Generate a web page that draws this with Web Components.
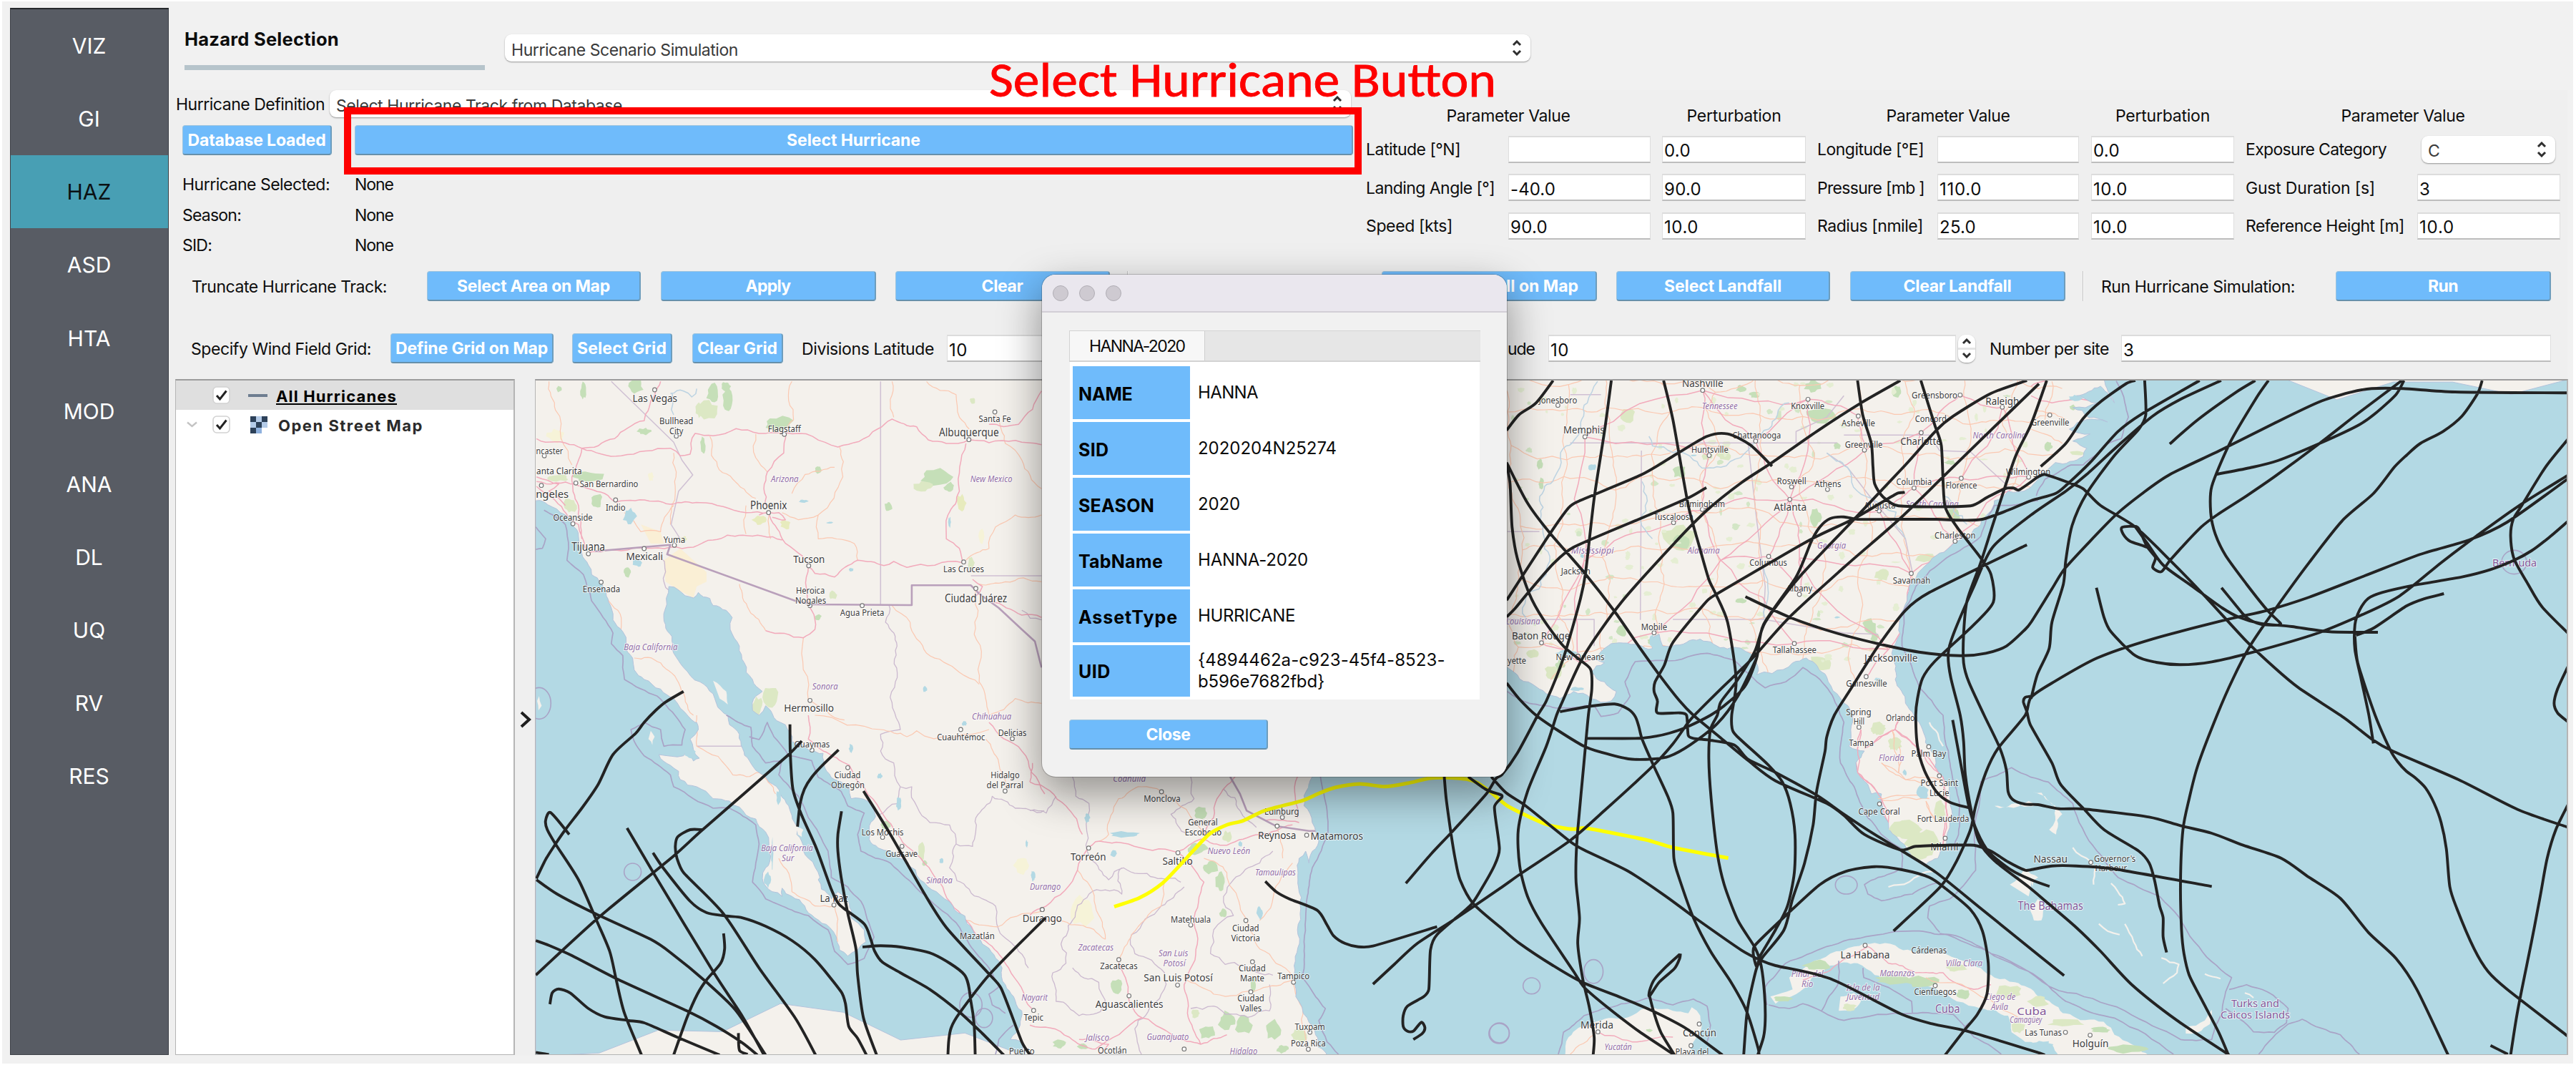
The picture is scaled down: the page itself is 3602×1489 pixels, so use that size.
<!DOCTYPE html>
<html lang="en">
<head>
<meta charset="utf-8">
<title>Hazard Selection</title>
<style>
  body { margin: 0; background: #fff; font-family: Inter, "Liberation Sans", sans-serif; color: #0d0d0d; }
</style>
</head>
<body>
<haz-app></haz-app>
<script>
const ctx = document.createElement('canvas').getContext('2d');
// letter spacing that makes a text take up the wanted width
const spacing = (text, width, font) => {
  ctx.font = font;
  return ((width - ctx.measureText(text).width) / text.length).toFixed(3) + 'px';
};
class Base extends HTMLElement {
  connectedCallback() {
    if (this.shadowRoot) return;
    this.attachShadow({ mode: 'open' }).innerHTML = this.render();
    this.ready && this.ready();
  }
  a(name, fallback = '') { return this.hasAttribute(name) ? this.getAttribute(name) : fallback; }
}
const def = (name, cls) => customElements.define(name, cls);

def('ui-label', class extends Base {
  render() {
    const size = this.a('size', 23), weight = this.a('weight', 400), w = +this.a('w');
    const ls = w ? spacing(this.textContent.trim(), w, `${weight} ${size}px Inter`) : '0';
    return `<style>:host{display:inline-block;flex:none;white-space:pre;line-height:1.2;padding-top:3px;font-size:${size}px;font-weight:${weight};letter-spacing:${ls};${w ? `width:${w}px` : ''}}</style><slot></slot>`;
  }
});
def('ui-button', class extends Base {
  render() {
    const t = this.a('text');
    return `<style>:host{display:flex;flex:none;box-sizing:border-box;height:42px;align-items:center;justify-content:${this.a('align', 'center')};background:#6fbbfb;border:1px solid #9cc4df;border-right:2px solid #6d9dbd;border-bottom:2.5px solid #6690ab;border-radius:4px;color:#fff}</style>
    <ui-label size="23" weight="700" w="${this.a('tw')}">${t}</ui-label>`;
  }
});
def('ui-field', class extends Base {
  render() {
    return `<style>:host{display:flex;flex:none;box-sizing:border-box;height:38px;align-items:center;background:#fff;border:1px solid #dedede;border-top:2px solid #dcdcdc;border-bottom:2px solid #bdbdbd;padding:3px 0 0 2px}</style>
    <ui-label size="24" w="${this.a('tw')}">${this.a('value')}</ui-label>`;
  }
});
const chevrons = (h = 22) => `<svg width="14" height="${h}" viewBox="0 0 14 ${h}" fill="none" stroke="#2f2f2f" stroke-width="3"><path d="M2 7L7 2L12 7M2 ${h - 7}L7 ${h - 2}L12 ${h - 7}"/></svg>`;
def('ui-combo', class extends Base {
  render() {
    return `<style>:host{display:flex;flex:none;box-sizing:border-box;height:38px;align-items:center;justify-content:space-between;background:#fff;border-radius:9px;box-shadow:0 1px 2px rgba(0,0,0,.38);padding:0 12px 0 9px;color:#3a3a3a}ui-label{padding-top:7px}</style>
    <ui-label size="23" w="${this.a('tw')}">${this.a('value')}</ui-label>${chevrons()}`;
  }
});
def('ui-stepper', class extends Base {
  render() {
    return `<style>:host{display:flex;flex:none;width:24px;height:39px;align-items:center;justify-content:center;border-radius:10px;background:linear-gradient(#fff 46%,#e4e4e4 46%,#e4e4e4 54%,#fff 54%);box-shadow:0 1px 2px rgba(0,0,0,.38)}</style>${chevrons(28)}`;
  }
});
def('nav-item', class extends Base {
  render() {
    return `<style>:host{display:flex;height:102.15px;align-items:center;justify-content:center;font-size:30px;color:#fff;padding-right:1px}
    :host([active]){background:#489fb4;color:#0b1114}</style><slot></slot>`;
  }
});
def('nav-rail', class extends Base {
  render() {
    return `<style>:host{display:block;flex:none;box-sizing:border-box;width:222px;height:1464px;background:#585c64;border:1px solid #3d4147;border-top:2px solid #26292c}</style><slot></slot>`;
  }
});
def('param-grid', class extends Base {
  render() {
    const rows = [
      ['Latitude [°N]', 132, '', 0, '0.0', 37, 'Longitude [°E]', 149, '', 0, '0.0', 37, 'Exposure Category', 197],
      ['Landing Angle [°]', 180, '-40.0', 63, '90.0', 52, 'Pressure [mb ]', 150, '110.0', 59, '10.0', 48, 'Gust Duration [s]', 181, '3', 14],
      ['Speed [kts]', 121, '90.0', 52, '10.0', 48, 'Radius [nmile]', 148, '25.0', 51, '10.0', 48, 'Reference Height [m]', 222, '10.0', 49]];
    const L = (c, t, w) => `<ui-label style="grid-column:${c}" w="${w}">${t}</ui-label>`;
    const F = (c, t, w) => `<ui-field style="grid-column:${c}" value="${t}" tw="${w || ''}"></ui-field>`;
    return `<style>:host{display:grid;grid-template-columns:199px 199px 16px 201px 16px 168px 198px 17px 200px 16px 240px 200px;grid-template-rows:26px 38px 38px 38px;row-gap:15.5px;align-items:center;align-content:start;margin-top:22px;margin-left:-1px;flex:none}
    .h{justify-self:center}ui-combo{width:187px;margin-left:6px}</style>
    <ui-label class="h" style="grid-column:1/3" w="173">Parameter Value</ui-label><ui-label class="h" style="grid-column:4" w="132">Perturbation</ui-label>
    <ui-label class="h" style="grid-column:6/8" w="173">Parameter Value</ui-label><ui-label class="h" style="grid-column:9" w="132">Perturbation</ui-label>
    <ui-label class="h" style="grid-column:11/13" w="173">Parameter Value</ui-label>` +
      rows.map(r => L(1, r[0], r[1]) + F(2, r[2], r[3]) + F(4, r[4], r[5]) + L(6, r[6], r[7]) + F(7, r[8], r[9]) + F(9, r[10], r[11]) + L(11, r[12], r[13]) +
        (r.length > 14 ? F(12, r[14], r[15]) : '<ui-combo style="grid-column:12" value="C" tw="16"></ui-combo>')).join('');
  }
});
const check = `<svg width="25" height="25" viewBox="0 0 25 25"><rect x="1" y="1" width="23" height="23" rx="5" fill="#fff" stroke="#d2d2d2" stroke-width="1.6"/><path d="M6 13L10.5 18L19.5 6.5" fill="none" stroke="#222" stroke-width="3"/></svg>`;
def('layer-tree', class extends Base {
  render() {
    return `<style>:host{display:block;flex:none;box-sizing:border-box;width:475px;height:945px;background:#fff;border:1px solid #b5b5b5;border-top:2px solid #9c9c9c;border-right-width:2px}
    .r{display:flex;height:41px;align-items:center}.s{background:#dfdfdf}svg{flex:none}
    .s ui-label{text-decoration:underline;text-decoration-thickness:2px;text-underline-offset:2px;color:#000}.r+.r ui-label{color:#2b2b2b}</style>
    <div class="r s"><span style="width:51px"></span>${check}<svg style="margin:0 12px 0 25px" width="27" height="4"><rect width="27" height="4" fill="#6e7d90"/></svg><ui-label size="22" weight="700" w="169">All Hurricanes</ui-label></div>
    <div class="r"><svg style="margin:0 21px 0 15px" width="15" height="9" viewBox="0 0 15 9"><path d="M1 1.5L7.5 7L14 1.5" fill="none" stroke="#c4c4c4" stroke-width="2.4"/></svg>${check}
    <svg style="margin:0 15px 0 28px" width="24" height="24" viewBox="0 0 3 3"><rect width="3" height="3" fill="#b4cbe8"/><path d="M0 0h1v1H0zM2 0h1v1H2zM1 1h1v1H1zM0 2h1v1H0z" fill="#2d4159"/><path d="M2 2h1v1H2z" fill="#fff"/><path d="M1 2h1v1H1z" fill="#8fb1de"/></svg><ui-label size="22" weight="700" w="203">Open Street Map</ui-label></div>`;
  }
});

/* ---------- map data: every list is written in the grid of one sheet (letter prefix) ---------- */
const SHEET = { A: [740, 520, 720 / 1568, 1 / 3], B: [740, 1000, 720 / 1568, 1 / 3], C: [1440, 1000, 720 / 1568, 1 / 3],
  D: [2100, 520, 750 / 1568, 1 / 3], E: [2100, 1000, 750 / 1568, 1 / 3], F: [2840, 520, 762 / 1568, 1 / 3], G: [2840, 1000, 762 / 1568, 1 / 3] };
const at = (s, x, y) => [SHEET[s][0] + x * SHEET[s][2], SHEET[s][1] + y * SHEET[s][3]];
const pts = str => {
  let s = 'A'; const out = [];
  for (const tok of str.trim().split(/\s+/)) {
    const m = tok.match(/^([A-G]?)(-?[\d.]+),(-?[\d.]+)$/);
    if (m[1]) s = m[1];
    out.push(at(s, +m[2], +m[3]));
  }
  return out;
};
let seed = 7;
const rnd = () => (seed = (seed * 16807) % 2147483647) / 2147483647;
const P = p => p.map(q => q[0].toFixed(1) + ',' + q[1].toFixed(1)).join(' ');
const line = p => 'M' + P(p);
const wobble = (p, amt = .09) => {
  for (let k = 0; k < 3; k++) {
    const o = [p[0]];
    for (let i = 1; i < p.length; i++) {
      const [a, b] = [p[i - 1], p[i]], dx = b[0] - a[0], dy = b[1] - a[1];
      if (Math.hypot(dx, dy) > 9) { const r = (rnd() - .5) * 2 * amt; o.push([(a[0] + b[0]) / 2 - dy * r, (a[1] + b[1]) / 2 + dx * r]); }
      o.push(b);
    }
    p = o;
  }
  return p;
};
const smooth = p => {
  let d = 'M' + p[0].map(v => v.toFixed(1));
  for (let i = 0; i < p.length - 1; i++) {
    const a = p[i - 1] || p[i], b = p[i], c = p[i + 1], e = p[i + 2] || c, k = 7.5;
    const L = Math.hypot(c[0] - b[0], c[1] - b[1]), f = (u, v) => { const m = Math.hypot(v[0] - u[0], v[1] - u[1]) / k; return m > L / 3 ? L / 3 / m / k : 1 / k; };
    const f1 = f(a, c), f2 = f(b, e);
    d += `C${(b[0] + (c[0] - a[0]) * f1).toFixed(1)} ${(b[1] + (c[1] - a[1]) * f1).toFixed(1)} ${(c[0] - (e[0] - b[0]) * f2).toFixed(1)} ${(c[1] - (e[1] - b[1]) * f2).toFixed(1)} ${c[0].toFixed(1)} ${c[1].toFixed(1)}`;
  }
  return d;
};
const WATER = [
 'A20,540 45,545 95,590 130,635 150,690 160,760 180,810 190,850 220,885 235,940 250,990 255,1040 285,1090 295,1140 315,1200 320,1250 350,1290 400,1330 440,1370 460,1410 485,1445 505,1470 B510,30 515,60 490,100 518,180 500,192 480,150 470,170 395,165 430,210 455,235 460,270 510,300 560,350 610,360 640,385 690,435 720,490 730,540 735,590 720,640 710,685 740,740 770,760 770,725 800,760 870,850 915,890 935,930 945,985 970,1010 1000,985 1025,950 1020,900 980,850 975,790 940,740 920,770 890,730 880,690 885,680 850,600 830,530 815,500 820,470 800,420 790,380 765,330 730,280 700,240 670,190 650,140 640,80 610,40 605,0 A570,1390 560,1350 520,1300 470,1240 440,1180 435,1110 415,1060 413,1000 425,900 455,915 500,948 515,925 550,950 560,980 600,1000 618,1030 612,1080 640,1150 655,1220 680,1290 710,1340 690,1360 680,1420 700,1440 720,1400 745,1450 765,1470 B780,40 800,110 850,145 895,160 900,220 930,270 975,300 980,350 1030,360 1050,400 1055,425 1035,480 1035,520 1100,570 1150,620 1190,690 1240,740 1290,800 1350,900 1380,960 1440,1060 1450,1130 1475,1180 1500,1240 1495,1300 1465,1360 1500,1370 1510,1430 20,1430',
 'C905,1430 870,1340 845,1270 810,1180 800,1120 805,1050 815,900 818,720 820,600 840,570 850,620 870,560 880,530 860,450 835,380 850,300 860,258 D16,1240 45,1270 90,1310 130,1350 170,1370 210,1340 260,1370 320,1380 335,1340 300,1300 260,1260 300,1220 270,1200 310,1150 400,1145 440,1160 445,1110 460,1100 470,1150 520,1145 600,1130 680,1155 740,1200 745,1270 790,1265 850,1220 890,1200 950,1280 980,1350 1020,1420 1025,1470 E1020,60 1015,130 1060,150 1035,200 1050,260 1080,330 1110,330 1110,370 1130,450 1165,530 1200,600 1240,625 1275,600 1300,540 1310,450 1310,350 1290,260 1260,160 1230,60 1205,0 D1180,1390 1150,1290 1140,1180 1165,1100 1165,1030 1185,960 1200,880 1240,810 1280,760 1320,720 1370,690 1400,640 1440,540 1480,500 1540,490 1568,450 F30,425 70,380 150,355 160,320 120,290 170,260 110,240 160,200 220,210 120,150 190,130 130,100 200,60 225,100 240,130 210,30 1550,30 G1550,1430'];
const LAND = [
 'E185,1430 195,1350 225,1310 290,1280 380,1260 440,1225 500,1240 545,1250 555,1225 580,1260 585,1300 560,1370 555,1430',
 'E785,1180 850,1150 840,1100 900,1040 960,1000 1030,970 1090,955 1150,965 1200,990 1270,990 1330,1020 1400,1060 1440,1100 1500,1120 1568,1180 G60,1210 130,1270 230,1310 240,1340 290,1380 355,1430 80,1430 60,1380 0,1370 E1530,1370 1490,1330 1480,1260 1400,1230 1330,1200 1280,1160 1220,1120 1130,1110 1090,1090 1040,1040 960,1050 930,1080 900,1120 860,1170 800,1210',
 'E990,1180 1030,1165 1050,1200 1020,1240 985,1240', 'E1485,710 1530,640 1568,680 G10,690 5,720 0,700 E1540,760',
 'G0,800 20,770 38,800 30,860 8,860 E1545,820','E1440,380 1480,385 1540,360 1568,370 1490,372 1455,390','G5,320 30,325 60,370 90,415 75,440 72,500 52,480 70,440 70,380 40,340','G445,1310 500,1280 520,1235 515,1295 480,1330 445,1335','B370,65 382,90 375,125 363,100','A560,1295 600,1340 605,1395 580,1370','A30,1360 38,1400 28,1420 24,1380','B815,470 835,480 830,510 818,500'];
const ISLETS = ['G120,555 130,575 160,600 185,640 180,710','G230,705 250,740 270,790 250,795','G270,875 295,950 320,1010','G195,875 220,905 255,920','G375,1018 425,1045 420,1080 380,1125','G500,1085 545,1105','G615,1165 640,1185','E1130,720 1190,700 1260,655','D1250,1470 E1290,130'];
const PINK = ['A22,280 50,295 110,298 160,320 210,310 260,280 300,235 350,205 365,150 400,40','A160,320 280,352 430,320 460,352 490,345 505,258 560,268 630,238 700,258 780,255 940,315 1060,240 1105,198 1180,230 1215,285 1270,300 1340,285 1400,297 1560,305','A780,255 775,340 725,420 720,560','A140,470 230,510 265,545 380,542 430,555 520,548 660,590 730,590 770,700 820,760 850,815 870,845 930,860 1000,790 1080,812 1110,795 1150,820 1320,800 1310,740 1270,700 1275,600 1310,500 1330,300','A180,760 280,750 430,735 500,735 560,705 650,685 770,705','A22,460 140,470','A1560,80 1490,220 1400,220','A850,815 860,1000 870,1080 835,1115 720,1085','A22,480 80,540 150,640 170,740','A22,440 90,470 60,500 110,560','A160,320 130,440 150,560 160,700','A1405,960 1500,1020 1560,1030','A700,600 760,590 780,620 740,610','A1350,870 1380,900 1360,940',
 'B850,0 850,100 895,150 975,210 1070,400 1150,550 1250,700 1330,860 1400,960 1460,1060 1530,1230','B1400,30 1500,150 1530,240 1570,330',
 'C178,555 145,650 50,800 0,840','C178,555 200,530 300,540 450,575 520,520 600,545 700,500 800,460','C450,575 530,700 500,870 510,960 470,1130 480,1250 520,1380','C270,1025 300,1180 330,1260 440,1350 520,1380 600,1340','C0,280 110,380 160,500','C625,258 570,350 530,500','C815,258 815,430','C0,1300 120,1350 200,1400 340,1270','C8,200 0,280','C150,1360 240,1380 210,1422','C720,440 820,450',
 'E1050,60 1040,140 1040,240 1110,350 1130,450','E1150,60 1060,140','E1150,60 1230,160 1290,260 1300,400 1290,540','E1150,60 1170,0','E1070,970 1130,1040 1210,1080 1290,1080 1380,1150 1430,1130','E1070,970 960,1070 880,1110','E275,1330 380,1370 500,1350','F0,100 60,130 220,130','F0,60 40,38'];
const ORANGE = ['A60,40 80,160 130,390','A550,270 555,350 620,450 690,530','A945,315 955,440 880,600 820,620 770,590','A690,260 690,360 725,420','A1105,40 1110,190','A1210,40 1300,95 1310,190 1340,240','A1420,180 1450,300 1500,370 1560,490','A1560,600 1480,600 1420,650 1400,740 1330,790','A1360,900 1355,1100 1370,1300 1400,1440','A835,1115 850,1380','A640,890 670,1000 720,1085','A1105,980 1160,1050 1210,1180 1310,1260 1370,1310','A320,1200 400,1220 460,1320 500,1440','A880,600 880,700 990,720 1000,790','A220,885 270,1000 295,1130','A290,590 340,670 400,670 440,560','A930,400 840,430 800,510','A800,40 805,200 780,255','A1560,880 1450,880 1370,890','A850,1380 960,1460','A1400,1440 1480,1370 1560,1390','A440,340 445,500 430,640','A660,560 660,680','A730,600 735,700',
 'B870,0 1070,60 1150,90 1180,65 1400,60','B510,0 510,130 620,250 700,240 750,330','B760,600 800,740 870,800 930,800 940,950','B1390,100 1430,200 1450,300','B1330,860 1440,880 1568,820',
 'C145,650 200,800 230,940','C410,700 400,800 310,920 270,1025','C340,300 270,350 240,500 200,530','C400,320 340,300','C400,320 530,500','C530,600 600,660 640,800 660,860','C660,860 700,980 800,1100','C50,860 150,880 230,940','C800,620 760,700 700,860','C470,1100 560,1170 700,1150 800,1110','C800,1120 830,1300 850,1400','C750,460 770,600','E1110,200 1180,270 1290,270','E1140,60 1160,240','E1100,350 1250,350','E1240,360 1270,440','E200,1422 275,1330','E1240,1100 1400,1180 1520,1280','F10,160 100,200','F0,240 90,300','F60,40 40,200'];
const CITIES = [[243,272],[587,77],[742,290],[585,578],[842,535],[240,795],[445,1095],[230,1220],[116,1137],[640,790],[780,775],[855,1140],[1130,1165],[1197,845],[1325,710],[1205,487],[1225,255],[1060,330],[1042,185],[895,115],[1463,148],[1340,97],[1103,585],[1343,447],[605,350],[1540,440],[1065,1280],[870,935],[870,780],[500,635]];
const LINKS = '0-1 1-2 2-4 3-4 0-24 24-1 3-24 3-9 9-10 9-6 6-7 7-8 5-7 5-0 5-8 9-4 10-4 4-28 28-13 28-12 13-12 13-14 22-15 22-4 22-13 15-16 15-14 16-17 17-4 16-21 21-20 18-19 19-2 19-1 18-17 15-23 23-25 20-25 20-23 12-11 11-6 12-26 10-27 27-28 3-29 29-5 11-9 14-25 19-4'.split(' ');
for (const l of LINKS) { const [a, b] = l.split('-').map(i => CITIES[i]); PINK.push(`D${a} ${b}`); }
for (let j = 0; j < 9; j++) for (let i = 0; i < 11; i++) {
  const g = (i, j) => { const t = Math.sin(i * 12.9 + j * 78.2) * 43758.5, f = t - Math.floor(t); return `D${(30 + i * 145 + (f - .5) * 70).toFixed(0)},${(50 + j * 140 + (f * 7 % 1 - .5) * 80).toFixed(0)}`; };
  if (i * 145 > 1150 && j > 5) continue;
  ORANGE.push(g(i, j) + ' ' + g(i + 1, j), g(i, j) + ' ' + g(i, j + 1));
}
const BORDER = ['A200,752 430,725 420,765 810,960 860,975 1165,978 1165,895 1345,895 1370,930 1430,990 1500,1080 1540,1130 1560,1240','C610,258 640,330 660,400 750,465 850,485 905,485'];
const ADMIN = ['A1095,975 1085,1050 1120,1150 1115,1300 1125,1470 B1130,60 1070,80 1070,150 1110,200 1130,300 1165,300 1220,450 1280,460 1300,540 1280,640 1340,730 1380,770 1420,800 1430,900 1490,990 1520,1060','A400,770 410,880 430,920','B1130,300 1125,370 1060,420','B1300,540 1350,550 1360,430 1410,340 1480,390 1568,400','C130,258 140,340 180,370 185,600 240,690 285,640 380,680 460,700','C0,400 50,410 80,340','C490,258 500,350 430,415 480,500','C590,310 640,400 690,470','C470,720 400,800 310,920 320,1000 410,1080 400,1170','C180,750 280,750 280,640','C180,750 130,860 95,960 110,1040 70,1080 80,1200 150,1260 230,1220 210,1120 130,1060','C740,570 700,620 620,690 590,760 620,840 560,900 550,1000 650,1050 740,1090','C490,1230 560,1220 640,1260 730,1240 730,1130','C400,1170 330,1280 340,1422','A1560,1040 1500,1000'];
const STATE = ['A250,40 440,295 465,370 498,432 455,500 432,640 460,700','A1070,40 1070,975','A1345,855 1560,855','D200,298 980,298','D408,330 405,1040','D720,300 745,620 770,900 765,1035','D500,1038 765,1038 1000,1095 1100,1100','D950,340 1010,400 1080,530 1180,700 1200,840','D270,1150 270,1038 16,1038','D860,298 860,250 950,190 1000,100','D1000,265 1250,265 1280,330 1370,335 1480,480','D16,670 110,670','D200,95 290,95','B510,130 650,130'];
const RIVER = ['D280,40 250,130 230,240 180,320 170,400 125,480 115,600 125,700 130,850 70,950 70,1030','D430,270 440,310 560,370 640,400 740,290','D950,340 1010,400 1080,530 1180,700','D840,130 780,240 740,290','D765,820 770,1035','D410,460 405,620 440,700','A430,90 470,80 495,105 510,70','A435,90 440,180','D1290,520 1360,640'];
const SEA = ['A45,580 110,640 120,740 115,790 165,850 190,960 225,1030 255,1095 250,1140 285,1190 290,1290 390,1360 460,1470 B475,60 465,125 410,130 400,60 350,30 310,60 320,110 350,170 430,250 440,300 500,350 560,390 610,390 690,460 700,540 690,620 680,700 720,770 770,800 850,840 910,900 930,990 970,1045 1020,1020 1050,930 1010,780 970,720 920,680 910,570 850,430 820,340 760,250 770,190 720,200 680,130 675,50 A600,1440','B670,90 700,102 725,30 745,90 790,170 860,190 880,260 950,320 970,380 1020,410 1000,500 1010,570 1100,620 1190,740 1300,870 1340,960 1400,1060 1430,1140 1400,1170 1410,1215 1450,1250','B1420,1422 1430,1360 1475,1300','A20,650 50,700 40,740 20,745','C885,258 905,400 908,490 860,640 845,760 835,950 830,1100 870,1180 900,1230 880,1280 905,1370 940,1422',
 'D16,1340 80,1390 160,1410 270,1400 290,1445 340,1430 375,1360 360,1300 390,1215 450,1210 600,1180 680,1210 770,1325 830,1300 880,1240 930,1290 980,1400 1000,1470 E990,200 1030,300 1070,430 1110,500 1170,560 1170,640 1100,680 1060,710 1070,750 1110,778 1200,750 1280,700','F15,520 40,450 115,390 150,390 210,310 260,280 280,190 270,130 245,38','D1568,540 1440,560 1400,690 1300,780 1210,900 1175,1000 1170,1150 1220,1320 1290,1440 E1310,200 1335,350 1335,500 1320,560','E770,1140 830,1040 950,970 1080,925 1220,905 1310,920 1430,1000 1568,1100 G100,1200 180,1250 240,1270 410,1422','E1280,915 1440,1010 G80,1155 270,1240 430,1360 520,1360 550,1240 560,1160 577,1100 470,950 370,760 250,680 190,570 120,370 50,280 0,260 E1490,220 1400,280 1385,560 1385,650 1310,770 1250,800 1245,850 1280,910','E780,1215 840,1230 880,1210 940,1245 1000,1280 1200,1250 1320,1255 1380,1350 1460,1422','E770,1140 775,1215','E935,1240 985,1120 985,1030','E1200,1250 1198,1200 1058,1100 1056,1060','G570,1150 620,1130 680,1160 740,1230 735,1290 700,1330 640,1328 560,1230','G655,1422 740,1295 780,1275 890,1340 945,1422','E165,1422 180,1330 240,1260 350,1210 430,1185 500,1215 560,1190 600,1220 610,1300 600,1370','E1350,1310 1365,1290'];
const RINGS = ['B315,657,26,36','C1528,1135,26,34','C1430,1332,30,42','E268,1075,28,50','E1007,712,32,38','F1390,798,36,50','A30,1390,36,66','E-8,1335,30,42','B1345,1215,34,52','B1385,1270,26,40'];
const GREEN = [ 'A325,60,22,30','A165,80,9,35','A90,72,8,12','A560,90,20,40','A605,120,16,50','A540,160,34,38,2','A760,220,44,32','A528,310,8,38','A350,250,20,14','A180,440,46,24','A90,445,30,14,2','A205,540,16,30','A125,560,20,30,2','A1240,440,50,36','A1200,480,28,20,2','A1280,485,16,24','A1315,550,14,34,3','A1095,565,12,22','A300,840,11,20','A735,1365,22,42,2','A695,1400,16,36,2','A880,410,10,16','A700,620,20,20,3','A780,640,16,20,3','A1345,800,10,26,2','A520,160,14,30,2','A470,700,10,10,3','A1350,120,10,12,2','A880,1030,10,12','A925,935,12,20,2','A80,270,26,30,4','A370,440,9,18,4','A1378,690,9,28,4','A600,60,14,20','B1085,460,16,16','B1195,570,10,40,2','B1205,620,8,14','B1500,630,24,40,4','C520,410,20,24','C510,560,30,24','C550,640,22,26','C580,700,14,40','C590,830,12,20','C265,1140,18,30','C540,1330,26,30','C600,1280,26,36','C650,1300,26,40','C740,1320,22,40','C770,1400,18,18','C90,1380,20,18','C160,1390,18,14','C680,1130,8,30','C160,820,34,60,4','C600,510,14,24,2','C820,1340,24,30,2','C505,1250,14,20,2',
 'D935,180,48,32','D520,420,22,24','D520,700,50,60,2','D520,715,28,30','D918,610,16,40','D115,470,8,26','D110,385,10,22','D370,180,22,30,2','D700,70,16,14','D740,95,16,14','D910,60,26,24','D1155,80,14,24','D1075,1070,20,34','D1090,1110,12,22','D350,1090,14,24','D150,1260,24,30,2','D930,1220,40,30,2','D1310,380,16,10','D1320,600,20,26','D170,1230,14,20','D700,960,16,10','D435,1130,10,14','D650,350,20,24,2','D1110,850,20,26,2','D90,1180,20,18,2','D980,310,10,16','D600,355,16,16,2','D1240,780,30,20,2','D1200,930,10,50,2','E1180,480,44,36,2','E1230,540,46,60,2','E1280,400,16,40,2','E1100,55,20,26,2','E1150,120,20,26,2','E920,1050,40,22','E1150,1110,60,18','E1230,1120,46,24','E1350,1170,22,20','E820,1190,28,12','E1015,1225,22,14,2','E1480,1160,40,30,2','E1510,1310,20,26,2','E1330,1060,30,14,2','E430,1322,10,6','G20,1200,30,24,2','G100,1290,50,16,2','G200,1320,28,12','G280,1400,60,18','F205,150,22,28','F50,312,11,18','F120,150,10,12','F130,340,20,10,2','D40,1295,12,10,2'];
const LAKES = ['A305,605,20,34','A835,542,14,6','A915,632,9,4','A980,830,7,7','A1280,630,4,22','A1205,1330,6,14','A330,800,14,18','B490,160,18,20','B1125,370,8,26','B1325,35,8,10','B980,140,6,22','B1068,255,8,12','B760,345,8,30','B1255,610,6,12','B1515,540,4,16','B1535,680,6,16','C700,830,9,26','C290,500,46,12','C255,580,10,14','C175,430,8,20','C640,540,7,12','C10,670,6,18','C850,330,5,40','C870,420,5,50','D265,400,12,14','D235,770,5,12','E1228,325,20,28','E1178,240,6,12','D560,350,10,4','D980,1030,8,4','D1100,1290,10,8','D190,1180,30,14','D220,1330,20,8','D440,1130,8,30','B740,580,3,60','B725,690,10,30','F130,110,20,12','E560,1390,8,20','G30,1380,30,14'];
const TRACKS = ['A470,1340 415,1385 385,1420 350,1470 B325,75 255,165 210,290 160,390 110,480 80,540 50,605 22,685','B22,690 85,750 190,825 370,940 430,995 540,1120 630,1240 720,1425','B122,500 65,408 50,440 55,480 80,540 150,690 205,860 245,990 265,1110 290,1250 342,1425','B830,108 790,165 520,490 440,590 210,850 20,1090','B298,473 380,665 560,1075 650,1265 715,1425','B377,577 405,635 490,780 540,828 600,842 650,850 720,885 800,945 870,1025 950,1160 963,1210 973,1305 1000,1355 1027,1425','B527,480 490,480 452,510 445,550 450,600 470,660 590,830 700,1060 810,1270 872,1425','B592,915 595,980 583,1040 540,1110 512,1170 480,1270 440,1425','B20,945 60,965 130,1008 270,1108 480,1240 570,1305 650,1375 695,1425','B63,1212 70,1165 90,1148 125,1165 180,1230 230,1265 300,1280 350,1290 450,1350 580,1425','B637,1333 640,1405 665,1422','B20,1414 60,1423','B794,38 795,160 803,310 830,420 875,560 920,730 945,795 1020,875 1040,940 1052,990 1075,1035 1130,1080 1220,1150 1310,1245 1380,1335 1445,1425','B942,145 900,200 860,260 838,310 825,370 817,467','B951,403 940,500 940,570 950,680 970,830 995,980 1000,1090 1018,1270 1058,1425','B1018,318 1100,500 1200,740 1270,890 1400,1085 1437,1145 1500,1370 1525,1425','B1015,972 1070,967 1130,972 1230,1002 1325,1088 1345,1200 1355,1300 1358,1425','C48,850 0,915 B1400,1090 1310,1250 1285,1310 1278,1360 1275,1425',
 'C717,697 750,740 790,770 875,818 905,880 925,925 960,957 1000,971 1045,968 1240,887','C1045,1128 1110,1045 1180,957 1300,850 1430,728 E60,660 200,525 300,400 440,215 500,120 545,30 D570,1430 640,1330 730,1205 840,1030 1000,820 1160,620 1290,440 1440,230 1570,50','C1262,258 1268,350 1283,500 1295,600 1310,690 1350,790 E0,895 50,955 150,1050 235,1120 350,1185 440,1240 540,1315 645,1425','C1335,258 1390,312 1437,335 1437,345 1415,385 1430,560 1415,630 1370,740 1340,800 1240,920 1220,985 1215,1150 1200,1180 1150,1220 1137,1260 1137,1305 1150,1325 1168,1325 1192,1288 1203,1310 1195,1335 1168,1360','C1145,705 1220,585 1285,490 1390,330 1420,265 E0,250 45,160 105,0 D130,1380 180,1200 230,950 245,840 270,530 300,250 320,36','C1405,258 1450,325 E70,380 200,530 240,565 370,655 480,760 570,855 700,985 760,1030 800,1050 960,1105 1170,1255 1260,1295 1360,1325 1568,1415 G40,1425','D1165,36 1050,130 920,250 790,380 700,465 600,580 510,710 350,965 240,1190 175,1390 160,1440 E130,130 75,320 48,480 52,630 75,760 115,870 210,1075 240,1140 300,1215 400,1325 505,1425','D14,385 24,470 30,650 45,780 80,930 120,1035 180,1150 235,1215 260,1250 263,1330 253,1440 E240,200 222,480 217,600 217,700 227,850 222,960 237,1110 255,1220 270,1350 267,1425','D14,1305 50,1370 100,1440 E160,60 240,130 290,155 370,183 440,184 490,172 550,125 630,35 D690,1360 745,1200','D170,1425 260,1402 330,1393 370,1415 390,1445 E400,45 410,100 440,200 485,340 500,410 503,600 520,690 560,850 610,990 670,1120 715,1240 750,1400 752,1425','E250,97 400,97 450,88 490,75 540,50 610,0 D650,1400 710,1320 745,1200 765,1060 860,860 905,710 930,650 960,615 1000,608 1040,618 1270,618 1340,622 1405,618 1480,580 F0,540 70,510 105,470 170,380 250,250 320,175 485,36','D14,380 75,550 140,675 240,840 330,1005 400,1150 460,1270 520,1380 560,1440 E640,95 720,190 800,275 950,370 1000,420 1060,500 1165,565 1210,550 1300,545 1380,545 1430,570 1480,615 1530,650 G0,648 60,632 130,632 240,645 520,718',
 'D473,36 500,200 545,560 575,720 605,870 625,930 660,1050 685,1290 672,1440 E675,65 700,105 780,210 820,280 843,370 857,500 855,660 835,800 800,900 755,1010 745,1055 735,1000 740,965 830,840 930,710 1005,655 1090,635 1170,648 1250,680 1300,730 1370,815 1405,905 1422,1040 1418,1170 1390,1255 1350,1325 1296,1425','D1535,725 1250,925 1180,1000 1100,1150 1020,1330 972,1440 E950,90 945,150 920,320 910,460 885,620 850,770 825,900 765,1010 745,1060 722,1200 715,1270 707,1425','D1535,36 1430,90 1320,185 1270,245 1180,390 1035,610 870,860 770,1050 740,1170 690,1290 640,1385 630,1440 E610,60 605,180 612,350 630,580 650,710 690,860 740,975 758,1050 768,1170 770,1280 765,1350 748,1425','D1178,505 1155,510 1030,615 900,705 630,930 600,960 500,1135 475,1230 448,1300 445,1340 455,1380 455,1430 520,1430 540,1440 E545,85 560,97 610,105 680,125 720,185 800,240 920,335 1000,415 1090,500 1165,565 1270,660 1400,810 1568,1005 G95,1092','D150,36 100,130 50,180 14,245','D790,395 725,305 660,260 600,270 510,345 410,430 220,545 195,570 140,680 14,958','D598,485 550,525 430,600 210,735 150,805 80,920 40,990 14,1028','D1040,36 1055,180 1080,300 1085,400 1090,470 1115,525 1160,562 1370,562 1420,525 1470,490 1495,487 1512,495 1568,440 F40,430 110,465 150,490 200,560 300,650 400,790 500,940 620,1130 700,1240 770,1325 900,1450 G980,100 1040,150 1230,270 1400,395 1545,470','F300,650 335,720 380,810 460,895 550,990 600,1030 660,1055 750,1068 860,1090 998,1092','F1067,36 940,175 830,300 700,440 620,520 540,595 490,650 400,790 375,838 350,820 358,780 340,740 285,710 265,680 262,652 305,650 320,690 335,735 360,780','D1225,36 1265,220 1285,310 1295,560 1330,650 1400,780 1430,850 1437,965 1380,1060 1265,1215 1230,1285 1215,1370 1210,1440 E1215,130 1235,230 1270,320 1310,365 1365,388','D712,943 840,1028 970,1092 1100,1140 1220,1175 1340,1190 1415,1180 1475,1150 1530,1080 F0,1050 60,910 100,820 240,605 320,510 400,430 550,325 700,215 830,125 920,85 980,70 1070,70 1220,84 1545,88','F45,36 0,220 D1500,360 1440,620 1400,800 1360,960 1350,1100 1350,1220 1365,1300 1410,1440 E1455,135 1475,230 1480,320 1495,355 1530,373 G20,375 80,392 150,393 340,427 430,463 520,495 610,545 720,600 800,680 890,768 970,910 1050,1020 1110,1150 1200,1425',
 'F547,36 430,115 350,185 250,310 160,430 100,500 0,600 D1435,735 1380,900 1320,1100 1305,1180 1312,1280 1340,1440 E1350,110 1355,250 1375,420 1395,530 1440,610 1540,720 G50,790 130,890 200,990 290,1130 420,1280 570,1425','E1318,20 1340,190 1365,380 1390,490 1425,575 1490,650 G0,690 53,718','E1145,905 1190,845 1285,715 1330,610 1370,480 1385,380 1415,240 1450,140 1530,0 F0,1365 60,1305 190,1200 350,1120 560,1040 680,1000 800,945 960,855 1120,765 1260,705 1370,630 1545,448','F0,1360 D1530,1365 1525,1385 1535,1425 E1545,40 G60,200 85,290 150,390 210,480 310,570 340,620 355,690 370,800 380,850 380,930 390,995','F327,36 330,180 310,240 240,350 160,510 118,645 100,790 93,890 60,1050 52,1160 18,1270 0,1370','F300,36 275,48 200,125 150,195 100,300 28,397','F645,36 590,85 480,200 399,302','F683,36 650,105 575,290 520,480 517,590 530,680 560,770 620,890 680,1000 718,1055 710,1062 660,1058 620,1030 590,980 548,905','F1073,36 1050,95 990,175 940,225 830,300 710,372 630,402 530,430','F1298,36 1285,90 1240,185 1185,250 1120,300 1080,350 1045,400 985,510 895,625 800,800 700,1000 630,1150 580,1290 535,1440 G480,210 455,350 437,480 430,700 433,900 440,1000 455,1090 490,1190 540,1330 568,1425','F188,905 210,1030 230,1090 300,1190 360,1218 430,1228 520,1216 640,1175 820,1098 950,1020 1060,940 1180,800 1280,690 1400,565 1545,433','F1188,930 1130,952 1080,982 985,1075 935,1105','F1545,626 1490,695 1440,750 1390,790 1320,830 1240,860 1100,895 1010,925 970,950 945,1000 932,1060 932,1165 950,1290 972,1440 G985,118','F932,1110 940,1220 990,1440 G1035,150 1055,195 1080,235 1105,262 1135,305 1160,370 1180,450 1195,560 1205,720 1225,810 1275,980 1315,1075 1370,1150 1545,1347','F1545,282 1480,400 1410,565 1387,620 1380,690 1390,785 1430,890 1470,985 1545,1096','F1545,1235 1515,1330 1505,1390 1515,1430 G1545,28','G1545,375 1510,480 1485,600 1465,760 1440,950 1400,1240 1380,1425','G1322,1385 1372,1422','E522,1000 520,1020 505,1062 460,1120 432,1178 432,1155 445,1110 480,1055 520,1003','E432,1178 445,1250 465,1330 505,1425'];
const HANNA = 'C257,803 335,765 405,703 470,610 545,500 600,460 650,442 715,400 830,358 880,328 930,303 1005,288 1080,299 1150,285 1215,265 1270,262 1330,268 1365,285 1410,330 1460,385 1568,455 E175,472 210,478 245,473 420,522 500,555 662,599';
// sheet, centre x, centre y, drawn width, text, kind (r = region, c = country), size
const LABELS = `A 383 110 136 Las_Vegas - 15|A 448 205 103 Bullhead|A 448 247 42 City|A 777 237 100 Flagstaff|A 1418 196 98 Santa_Fe|A 1339 253 182 Albuquerque - 16|A 62 331 82 ncaster|A 91 415 138 anta_Clarita|A 243 468 178 San_Bernardino|A 70 512 100 ngeles - 15|A 263 567 60 Indio|A 133 611 120 Oceanside|A 180 734 102 Tijuana - 16|A 442 703 66 Yuma|A 351 773 112 Mexicali - 15|A 729 558 112 Phoenix - 16|A 852 784 96 Tucson - 15|A 1323 827 124 Las_Cruces|A 220 909 114 Ensenada|A 856 916 88 Heroica|A 857 957 94 Nogales|A 1014 1008 134 Agua_Prieta|A 1360 948 190 Ciudad_Juárez - 16|A 852 1410 152 Hermosillo - 15|A 778 447 84 Arizona r|A 1407 448 128 New_Mexico r|A 370 1152 164 Baja_California r|A 901 1317 78 Sonora r|A 1408 1445 120 Chihuahua r
|B 861 121 108 Guaymas|B 969 251 80 Ciudad|B 970 291 102 Obregón|B 1315 90 146 Cuauhtémoc|B 1471 73 86 Delicias|B 1449 251 88 Hidalgo|B 1449 293 112 del_Parral|B 1076 490 128 Los_Mochis|B 1134 581 98 Guasave|B 785 556 158 Baja_California r|B 788 597 38 Sur r|B 1249 691 80 Sinaloa r|B 928 766 86 La_Paz - 15|B 1364 925 106 Mazatlán|B 1562 851 120 Durango - 15|B 1539 1184 80 Nayarit r|B 1536 1268 60 Tepic|B 1500 1409 78 Puerto
|C 303 266 100 Coahuila r|C 403 350 112 Monclova|C 527 449 90 General|C 528 490 112 Escobedo|C 767 402 106 Edinburg|C 753 502 116 Reynosa - 15|C 935 506 160 Matamoros - 15|C 178 592 108 Torreón - 15|C 450 612 92 Saltillo - 15|C 606 567 130 Nuevo_León r|C 748 657 124 Tamaulipas r|C 47 717 94 Durango r|C 490 856 122 Matehuala|C 657 893 82 Ciudad|C 657 934 88 Victoria|C 201 973 108 Zacatecas r|C 437 998 90 San_Luis r|C 440 1038 68 Potosí r|C 271 1052 114 Zacatecas|C 677 1061 82 Ciudad|C 677 1101 74 Mante|C 452 1101 210 San_Luis_Potosí - 15|C 803 1092 98 Tampico|C 673 1187 82 Ciudad|C 673 1227 66 Valles|C 303 1212 206 Aguascalientes - 15|C 853 1307 92 Tuxpam|C 206 1352 72 Jalisco r|C 420 1349 128 Guanajuato r|C 848 1376 106 Poza_Rica|C 251 1405 88 Ocotlán|C 651 1407 84 Hidalgo r
|D 587 48 120 Nashville - 15|D 164 118 112 Jonesboro|D 637 141 104 Tennessee r|D 894 142 98 Knoxville|D 1265 98 134 Greensboro|D 1463 122 98 Raleigh - 15|D 240 243 120 Memphis - 15|D 1042 213 98 Asheville|D 1254 197 92 Concord|D 745 266 142 Chattanooga|D 608 325 108 Huntsville|D 1058 303 110 Greenville|D 1225 290 120 Charlotte - 15|D 1455 266 156 North_Carolina r|D 847 458 86 Roswell|D 953 468 78 Athens|D 1205 461 104 Columbia|D 1343 476 92 Florence|D 1539 419 130 Wilmington|D 585 552 134 Birmingham|D 843 566 96 Atlanta - 15|D 1258 552 154 South_Carolina r|D 1105 560 92 Augusta|D 502 608 116 Tuscaloosa|D 1325 686 120 Charleston|D 964 727 84 Georgia r|D 590 747 94 Alabama r|D 265 747 124 Mississippi r|D 779 800 110 Columbus|D 216 834 86 Jackson|D 1198 873 110 Savannah|D 870 908 76 Albany|D 62 1045 100 Louisiana r|D 445 1070 76 Mobile|D 114 1106 170 Baton_Rouge - 14|D 44 1210 54 yette|D 229 1196 142 New_Orleans|D 856 1165 128 Tallahassee|D 1138 1199 156 Jacksonville - 15|D 1066 1306 120 Gainesville|D 1043 1425 74 Spring|D 1165 1451 84 Orlando
|E 1044 24 32 Hill|E 1051 116 72 Tampa|E 1139 177 74 Florida r|E 1248 161 102 Palm_Bay|E 1279 284 110 Port_Saint|E 1279 325 58 Lucie|E 1103 402 122 Cape_Coral|E 1290 433 152 Fort_Lauderda|E 1294 550 82 Miami - 15|E 1062 1004 144 La_Habana - 15|E 1249 985 104 Cárdenas|E 1351 1040 108 Villa_Clara r|E 893 1084 94 Pinar_del r|E 893 1126 34 Río r|E 1156 1081 102 Matanzas r|E 1056 1140 98 Isla_de_la r|E 1056 1181 96 Juventud r|E 1267 1160 124 Cienfuegos|E 1457 1181 90 Ciego_de r|E 1455 1221 50 Ávila r|E 1303 1231 72 Cuba c 16|E 1532 1275 94 Camagüey r|E 1549 1240 86 Cuba c 15|E 278 1298 96 Mérida - 15|E 578 1331 98 Cancún - 15|E 340 1389 80 Yucatán r|E 556 1411 98 Playa_del
|F 55 212 110 Greenville|F 1391 800 128 Bermuda c 15|G 56 602 98 Nassau - 15|G 241 600 120 Governor's|G 230 640 92 Harbour|G 56 798 188 The_Bahamas c 16|G 645 1208 138 Turks_and c 15|G 645 1257 200 Caicos_Islands c 15|G 35 1331 106 Las_Tunas|G 171 1376 104 Holguín - 15`.split('|').map(s => s.trim().split(' '));
const DOTS = 'A382,75 A448,269 A777,262 A1418,168 A1339,284 A46,352 A37,476 A142,466 A263,537 A133,637 A180,763 A442,727 A350,741 A729,590 A851,813 A1323,797 A219,882 A855,980 A1014,980 A1360,908 A855,1378 B861,146 B970,220 B1314,60 B1471,98 B1449,318 B1076,512 B1135,550 B928,796 B1562,815 B1536,1238 C401,321 C769,428 C753,465 C843,503 C179,557 C451,577 C38,815 C490,880 C658,861 C271,1025 C678,1034 C450,1132 C302,1177 C673,1160 C803,1120 C853,1330 C848,1401 C470,1400 D587,77 D164,140 D895,115 D1340,97 D1463,148 D243,272 D1042,185 D742,290 D606,350 D1060,328 D1226,255 D847,482 D952,493 D1205,487 D1343,446 D1540,441 D586,577 D842,535 D1103,583 D502,632 D1325,710 D780,774 D1197,845 D870,933 D445,1094 D116,1136 D855,1139 D1065,1278 E1044,50 E1248,132 E1279,254 E1104,372 E1296,516 E1062,965 E1267,1134 E281,1328 E577,1295 E553,1386 F54,181 G172,617 G170,1342 G99,1330'.split(' ');

def('map-view', class extends Base {
  render() {
    const blob = (s, cols) => {
      const [x, y, rx, ry, c] = s.slice(1).split(',').map(Number), p = [];
      for (let i = 0; i < 14; i++) { const r = .7 + rnd() * .5, t = i / 14 * 6.283; p.push(at(s[0], x + Math.cos(t) * rx * r, y + Math.sin(t) * ry * r)); }
      return `<path d="${line(p)}Z" fill="${cols[c || 1]}"/>`;
    };
    const G = (list, stroke, w, f) => `<path d="${list.map(s => line(f ? wobble(pts(s), f) : pts(s))).join('')}" fill="none" stroke="${stroke}" stroke-width="${w}" stroke-linejoin="round"/>`;
    const greens = GREEN.map(s => blob(s, { 1: '#c5dfb8', 2: '#dce8c4', 3: '#e7ebbd', 4: '#f6f3d8' })).join('');
    const dust = Array.from({ length: 200 }, () => blob(`D${(20 + rnd() * 1530).toFixed(0)},${(40 + rnd() * 1180).toFixed(0)},${(4 + rnd() * 9).toFixed(0)},${(4 + rnd() * 12).toFixed(0)},${rnd() > .3 ? 2 : 1}`, { 1: '#d3e6c6', 2: '#e5eed3' })).join('');
    const labels = LABELS.map(([s, x, y, w, t, k, fs]) => {
      const [X, Y] = at(s, +x, +y), size = fs || 13, W = w * SHEET[s][2];
      const st = k === 'r' ? 'fill="#9470a8" font-style="italic"' : k === 'c' ? 'fill="#84599a"' : 'fill="#3c3c3c"';
      return `<text x="${(X - W / 2).toFixed(1)}" y="${(Y + size * .36).toFixed(1)}" font-size="${size}" textLength="${W.toFixed(1)}" lengthAdjust="spacingAndGlyphs" ${st}>${t.replace(/_/g, ' ')}</text>`;
    }).join('');
    return `<style>:host{display:block;flex:none;box-sizing:border-box;width:2843px;height:945px;border:1px solid #b5b5b5;border-top:2px solid #9c9c9c;border-right-width:2px;background:#f4f1ec}
    svg{display:block}text{font-family:"Noto Sans",sans-serif;paint-order:stroke;stroke:#fff;stroke-opacity:.7;stroke-width:2px}</style>
    <svg width="2840" height="942" viewBox="749 532 2840 942">
    <path d="${line(pts('A410,790 460,740 540,840 540,880 510,900 500,948 455,915 415,880'))}Z" fill="#faefd5"/><path d="${line(pts('A340,640 400,670 410,720 370,720'))}Z" fill="#faefd5"/>
    ${greens}${dust}
    ${G(STATE, '#cfc0d3', 1.5)}${G(ADMIN, '#cbb9cf', 1.3, .16)}${G(ORANGE, '#fbc8b1', 1.2, .12)}${G(PINK, '#f2aabb', 1.5, .09)}${G(BORDER, '#b9a0bb', 2.6)}
    ${G(RIVER, '#bcd3e2', 1.5, .2)}
    ${WATER.map(s => `<path d="${line(wobble(pts(s), .14))}Z" fill="#b3d9e4" stroke="#b3c3dc" stroke-width="1"/>`).join('')}
    ${LAND.map(s => `<path d="${line(wobble(pts(s), .12))}Z" fill="#f4f1ec"/>`).join('')}
    ${G(ISLETS, '#f4f1ec', 2.2, .1)}
    ${GREEN.filter(s => 'EG'.includes(s[0])).map(s => blob(s, { 1: '#c5dfb8', 2: '#dce8c4' })).join('')}
    ${G(PINK.filter(s => /^E/.test(s)), '#f2aabb', 1.4, .09)}${G(ORANGE.filter(s => /^E/.test(s)), '#fbc8b1', 1.2, .1)}
    ${LAKES.map(s => blob(s, { 1: '#b3d9e4' })).join('')}
    ${G(SEA, '#a9a3c6', 1.7, .05)}
    ${RINGS.map(s => { const [x, y, a, b] = s.slice(1).split(',').map(Number), [X, Y] = at(s[0], x, y); return `<ellipse cx="${X}" cy="${Y}" rx="${a * SHEET[s[0]][2]}" ry="${b / 3}" fill="none" stroke="#a9a3c6" stroke-width="1.6"/>`; }).join('')}
    ${DOTS.map(s => { const [X, Y] = pts(s)[0]; return `<circle cx="${X.toFixed(1)}" cy="${Y.toFixed(1)}" r="2.8" fill="#fff" stroke="#777" stroke-width="1.2"/>`; }).join('')}
    ${labels}
    <path d="${smooth(pts(HANNA))}" fill="none" stroke="#ff0" stroke-width="5"/>
    <path d="${TRACKS.map(s => smooth(pts(s))).join('')}" fill="none" stroke="#232323" stroke-width="3.9" stroke-linejoin="round"/>
    </svg>`;
  }
});

def('info-dialog', class extends Base {
  render() {
    const rows = [['NAME', 75.6, 'HANNA', 84], ['SID', 42.5, '2020204N25274', 194], ['SEASON', 106, '2020', 59], ['TabName', 118, 'HANNA-2020', 154], ['AssetType', 139, 'HURRICANE', 136], ['UID', 44.6]];
    return `<style>:host{display:block;box-sizing:border-box;width:650px;height:702px;border-radius:19px;background:#f1f1f1;box-shadow:0 0 0 1px rgba(0,0,0,.2),0 22px 56px 4px rgba(0,0,0,.38);overflow:hidden;color:#0a0a0a}
    .t{display:flex;height:53px;background:#eae7ee;border-bottom:2px solid #d2cfd6;box-sizing:border-box;padding:15px 0 0 15px;gap:15px}
    .t i{width:22px;height:22px;border-radius:50%;background:#cecad1;box-sizing:border-box;border:1.5px solid #b0adb4}
    .tabs{display:flex;margin:25px 37px 0 38px;height:44px;background:#e6e6e6;border:1px solid #d3d3d3;border-right:0;border-bottom-width:2px;box-sizing:border-box}
    .tab{display:flex;width:189px;box-sizing:border-box;background:#f7f7f7;border-right:1px solid #cfcfcf;align-items:center;padding-left:27px}
    .g{display:grid;grid-template-columns:164px 1fr;grid-template-rows:repeat(5,74.2px) 72px;row-gap:3.8px;margin:0 38px 0 39px;background:#fff;padding:6px 4px 4px;height:472px;box-sizing:border-box}
    .k{display:flex;align-items:center;background:#6fbbfb;padding-left:8px;color:#000}.v{display:flex;flex-direction:column;justify-content:center;padding-left:11px}.v ui-label{padding-top:1px}
    ui-button{width:278px;margin:28px 0 0 38px;height:42px}</style>
    <div class="t"><i></i><i></i><i></i></div>
    <div class="tabs"><div class="tab"><ui-label w="133.5">HANNA-2020</ui-label></div></div>
    <div class="g">${rows.map(r => `<div class="k"><ui-label size="25" weight="700" w="${r[1]}">${r[0]}</ui-label></div><div class="v">${r[2] ? `<ui-label size="24" w="${r[3]}">${r[2]}</ui-label>` : '<ui-label size="24" w="345.5">{4894462a-c923-45f4-8523-</ui-label><ui-label size="24" w="177">b596e7682fbd}</ui-label>'}</div>`).join('')}</div>
    <ui-button text="Close" tw="62"></ui-button>`;
  }
});
def('call-out', class extends Base {
  render() {
    return `<style>:host{display:block;width:710px;height:84px}svg{display:block;overflow:visible}</style>
    <svg width="710" height="84"><text x="-2" y="66" font-family="Carlito, Lato, sans-serif" font-size="67" fill="#fe0000" stroke="#fe0000" stroke-width=".8" textLength="709" lengthAdjust="spacingAndGlyphs">Select Hurricane Button</text></svg>`;
  }
});
def('haz-app', class extends Base {
  render() {
    const nav = ['VIZ', 'GI', 'HAZ', 'ASD', 'HTA', 'MOD', 'ANA', 'DL', 'UQ', 'RV', 'RES'];
    const B = (text, w, tw, ml, extra = '') => `<ui-button text="${text}" tw="${tw}" style="width:${w}px;margin-left:${ml}px" ${extra}></ui-button>`;
    const info = (k, w) => `<div class="i"><span><ui-label w="${w}">${k}</ui-label></span><ui-label w="54">None</ui-label></div>`;
    return `<style>
    :host{display:flex;position:relative;box-sizing:border-box;width:3602px;height:1489px;overflow:hidden;background:#f1f1f1;border:2px solid #fff;border-left-width:3px;border-right-width:4px;padding:9px 0 0 11px}
    .main{display:flex;flex-direction:column;flex:none;width:3352px;margin-left:2px}
    .head{display:flex;height:115px;padding-left:20px;box-sizing:border-box}
    .title{width:420px;height:87px;box-sizing:border-box;border-bottom:7px solid #b6c4cb;padding-top:26px}
    .panel{background:#efefef;height:1350px}
    .top{display:flex;height:253px}.left{width:1673px;flex:none}
    .row,.i{display:flex;align-items:center}.i{height:42.5px;padding-left:17px}.i span{width:241px}
    .sep{width:1px;height:42px;background:#c4c4c4;border-right:1px solid #fafafa}
    info-dialog{position:absolute;left:1454px;top:382px}
    .box{position:absolute;left:478px;top:148px;width:1423px;height:94px;box-sizing:border-box;border:10px solid #fe0000}
    call-out{position:absolute;left:1382px;top:67px}</style>
    <nav-rail>${nav.map(n => `<nav-item${n === 'HAZ' ? ' active' : ''}>${n}</nav-item>`).join('')}</nav-rail>
    <div class="main">
      <div class="head"><div class="title"><ui-label size="25.5" weight="700" w="216">Hazard Selection</ui-label></div>
        <ui-combo style="width:1434px;margin:37px 0 0 28px" value="Hurricane Scenario Simulation" tw="317"></ui-combo></div>
      <div class="panel">
        <div class="top"><div class="left">
          <div class="row" style="padding-left:8px;height:38px"><ui-label w="208">Hurricane Definition</ui-label><ui-combo style="width:1428px;margin-left:7px" value="Select Hurricane Track from Database" tw="400"></ui-combo></div>
          <div class="row" style="margin:10.5px 0 20px">${B('Database Loaded', 209, 193, 17)}${B('Select Hurricane', 1396, 187, 32)}</div>
          ${info('Hurricane Selected:', 206)}${info('Season:', 82)}${info('SID:', 41)}
        </div><param-grid></param-grid></div>
        <div class="row" style="padding-left:30px"><ui-label w="273">Truncate Hurricane Track:</ui-label>${B('Select Area on Map', 299, 214, 56)}${B('Apply', 301, 63, 28)}${B('Clear', 300, 58, 27)}
          <span class="sep" style="margin-left:24px"></span>${B('ll on Map', 301, 101, 354, 'align="flex-end" class="lf"')}${B('Select Landfall', 299, 164, 27)}${B('Clear Landfall', 301, 151, 28)}
          <span class="sep" style="margin-left:24px"></span><ui-label style="margin-left:24px" w="271">Run Hurricane Simulation:</ui-label>${B('Run', 301, 42, 57)}</div>
        <div class="row" style="padding-left:29px;margin-top:45px"><ui-label w="252">Specify Wind Field Grid:</ui-label>${B('Define Grid on Map', 228, 213, 27)}${B('Select Grid', 140, 125, 26)}${B('Clear Grid', 127, 112, 28)}
          <ui-label style="margin-left:26px" w="185">Divisions Latitude</ui-label><ui-field style="width:560px;margin-left:18px" value="10" tw="26"></ui-field>
          <ui-label style="margin-left:224px" w="38">ude</ui-label><ui-field style="width:570px;margin-left:19px" value="10" tw="26"></ui-field><ui-stepper style="margin-left:3px"></ui-stepper>
          <ui-label style="margin-left:20px" w="167">Number per site</ui-label><ui-field style="width:601px;margin-left:17px" value="3" tw="14"></ui-field></div>
        <div class="row" style="padding-left:7px;margin-top:22px"><layer-tree></layer-tree>
          <svg style="margin:7px 5px 0 7px;flex:none" width="16" height="26" viewBox="0 0 16 26"><path d="M2 3L13 13L2 23" fill="none" stroke="#1d1d1d" stroke-width="4"/></svg><map-view></map-view></div>
      </div>
    </div>
    <info-dialog></info-dialog><div class="box"></div><call-out></call-out>`;
  }
  ready() { this.shadowRoot.querySelector('.lf').style.paddingRight = '24px'; }
});
</script>
</body>
</html>
